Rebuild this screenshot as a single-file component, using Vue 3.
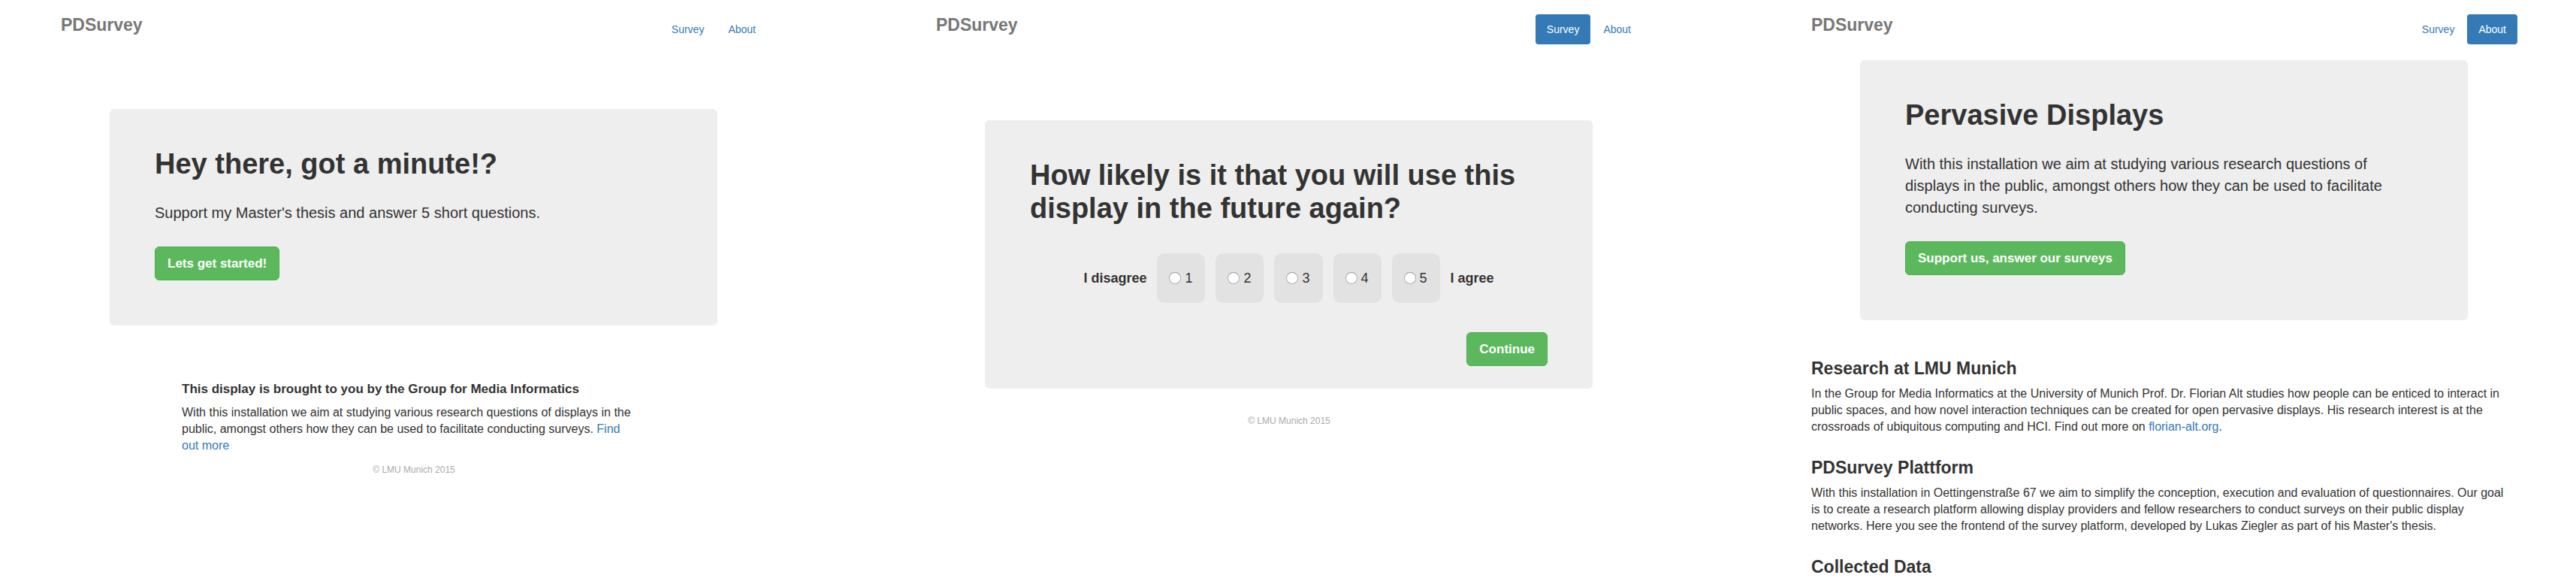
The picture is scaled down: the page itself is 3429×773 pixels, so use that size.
<script setup>
import { ref } from 'vue'

const scale = [1, 2, 3, 4, 5]
const answer = ref(null)
</script>

<template>
  <main class="screens">
    <section class="screen">
      <header class="top">
        <h3 class="brand">PDSurvey</h3>
        <nav class="nav">
          <a class="pill" href="#survey">Survey</a>
          <a class="pill" href="#about">About</a>
        </nav>
      </header>
      <div class="jumbo start">
        <h1>Hey there, got a minute!?</h1>
        <p class="lead">Support my Master's thesis and answer 5 short questions.</p>
        <button class="btn" type="button">Lets get started!</button>
      </div>
      <div class="info">
        <h4>This display is brought to you by the Group for Media Informatics</h4>
        <p>
          With this installation we aim at studying various research questions of displays in the
          public, amongst others how they can be used to facilitate conducting surveys.
          <a href="#about">Find out more</a>
        </p>
      </div>
      <footer class="foot">© LMU Munich 2015</footer>
    </section>

    <section class="screen">
      <header class="top">
        <h3 class="brand">PDSurvey</h3>
        <nav class="nav">
          <a class="pill active" href="#survey">Survey</a>
          <a class="pill" href="#about">About</a>
        </nav>
      </header>
      <form class="jumbo question" @submit.prevent>
        <h1 id="question">How likely is it that you will use this display in the future again?</h1>
        <div class="scale" role="radiogroup" aria-labelledby="question">
          <span class="end">I disagree</span>
          <label v-for="n in scale" :key="n" class="option">
            <input v-model="answer" type="radio" name="answer" :value="n" />
            <span>{{ n }}</span>
          </label>
          <span class="end">I agree</span>
        </div>
        <button class="btn next" type="submit">Continue</button>
      </form>
      <footer class="foot spaced">© LMU Munich 2015</footer>
    </section>

    <section class="screen">
      <header class="top">
        <h3 class="brand">PDSurvey</h3>
        <nav class="nav">
          <a class="pill" href="#survey">Survey</a>
          <a class="pill active" href="#about">About</a>
        </nav>
      </header>
      <div class="jumbo about">
        <h1>Pervasive Displays</h1>
        <p class="lead">
          With this installation we aim at studying various research questions of displays in the
          public, amongst others how they can be used to facilitate conducting surveys.
        </p>
        <button class="btn" type="button">Support us, answer our surveys</button>
      </div>
      <div class="articles">
        <article>
          <h3>Research at LMU Munich</h3>
          <p>
            In the Group for Media Informatics at the University of Munich Prof. Dr. Florian Alt
            studies how people can be enticed to interact in public spaces, and how novel
            interaction techniques can be created for open pervasive displays. His research
            interest is at the crossroads of ubiquitous computing and HCI. Find out more on
            <a href="#florian-alt">florian-alt.org</a>.
          </p>
        </article>
        <article>
          <h3>PDSurvey Plattform</h3>
          <p>
            With this installation in Oettingenstraße 67 we aim to simplify the conception,
            execution and evaluation of questionnaires. Our goal is to create a research platform
            allowing display providers and fellow researchers to conduct surveys on their public
            display networks. Here you see the frontend of the survey platform, developed by Lukas
            Ziegler as part of his Master's thesis.
          </p>
        </article>
        <article>
          <h3>Collected Data</h3>
        </article>
      </div>
    </section>
  </main>
</template>

<style>
html,
body {
  background: #fff;
}
</style>

<style scoped>
.screens {
  display: grid;
  grid-template-columns: repeat(3, minmax(0, 940px));
  justify-content: space-between;
  column-gap: 40px;
  padding: 0 78px 0 81px;
  color: #333;
  font-family: "Liberation Sans", Arial, sans-serif;
  font-size: 16px;
  line-height: 22px;
}
h1,
h3,
h4,
p {
  margin: 0;
}
h1 {
  font-size: 38px;
  line-height: 44px;
}
h3 {
  font-size: 23px;
  line-height: 26px;
}
h4 {
  font-size: 17px;
  line-height: 20px;
}
a {
  color: #337ab7;
  text-decoration: none;
}
.top {
  display: flex;
  justify-content: space-between;
  align-items: flex-start;
  padding-top: 19px;
}
.brand {
  color: #777;
  line-height: 28px;
}
.nav {
  display: flex;
  gap: 2px;
}
.pill {
  padding: 10px 15px;
  border-radius: 4px;
  font-size: 14px;
  line-height: 20px;
}
.pill.active {
  background: #337ab7;
  color: #fff;
}
.jumbo {
  display: flex;
  flex-direction: column;
  align-items: flex-start;
  margin: 0 66px 0 65px;
  padding: 51px 60px 60px;
  border-radius: 6px;
  background: #eee;
}
.start {
  margin-top: 86px;
}
.question {
  margin-top: 101px;
  padding-bottom: 30px;
}
.about {
  margin-top: 21px;
}
.lead {
  margin: 29px 0 30px;
  font-size: 20px;
  line-height: 29px;
}
.btn {
  padding: 11px 16px;
  border: 1px solid #4cae4c;
  border-radius: 6px;
  background: #5cb85c;
  color: #fff;
  font: bold 17px/21px "Liberation Sans", Arial, sans-serif;
  cursor: pointer;
}
.scale {
  display: flex;
  align-items: center;
  align-self: center;
  gap: 14px;
  margin: 38px 0 39px;
  font-size: 18px;
}
.end {
  font-weight: bold;
}
.option {
  display: flex;
  align-items: center;
  gap: 5px;
  padding: 22px 17px 22px 16px;
  border-radius: 10px;
  background: #e2e2e2;
}
.option input {
  appearance: none;
  width: 16px;
  height: 16px;
  margin: 0;
  border: 1px solid #b0b0b0;
  border-top-color: #999;
  border-radius: 50%;
  background: #fff;
}
.option input:checked {
  border: 5px solid #337ab7;
}
.next {
  align-self: flex-end;
}
.info {
  margin: 75px 161px 0;
}
.info p,
.articles p {
  margin-top: 10px;
  padding-right: 12px;
}
.foot {
  margin-top: 11px;
  color: #aaa;
  font-size: 12px;
  line-height: 20px;
  text-align: center;
}
.foot.spaced {
  margin-top: 33px;
}
.articles {
  display: flex;
  flex-direction: column;
  gap: 30px;
  margin-top: 51px;
}
</style>
